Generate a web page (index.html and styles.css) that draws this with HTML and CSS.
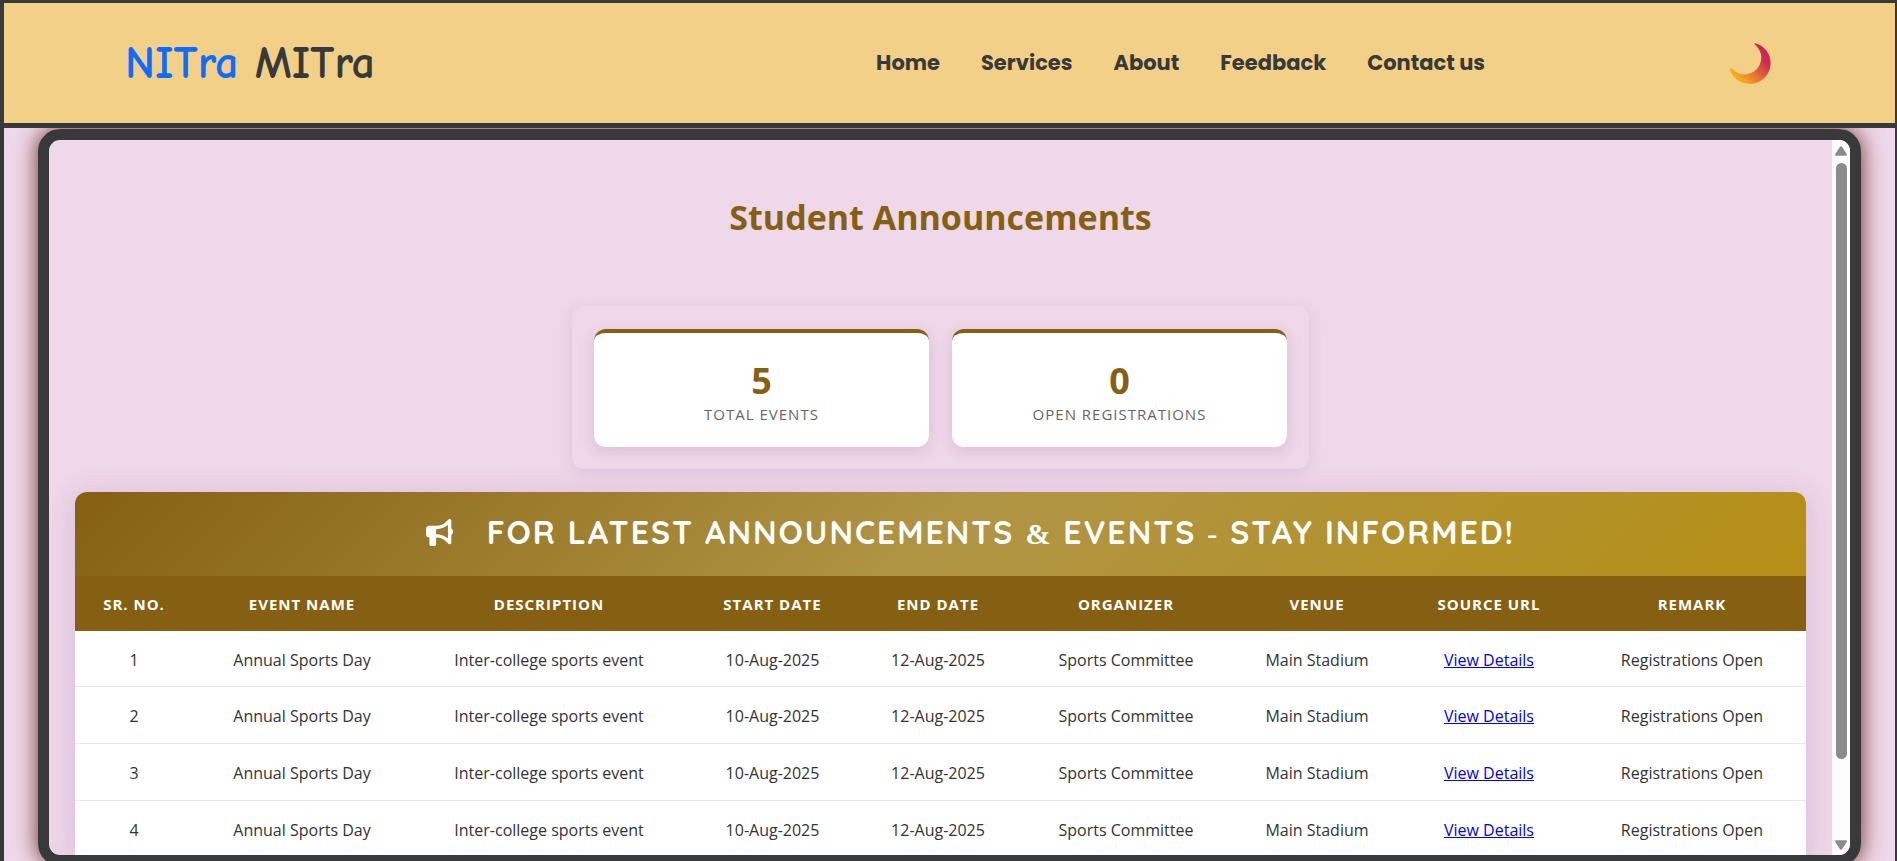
FILE: index.html
```html
<!DOCTYPE html>
<html lang="en">
<head>
<meta charset="utf-8">
<title>NITra MITra</title>
<link rel="stylesheet" href="styles.css">
</head>
<body>
<div class="page">
  <header class="header">
    <div class="logo"><span class="logo-accent">NITra</span> MITra</div>
    <nav class="nav">
      <a href="#">Home</a>
      <a href="#">Services</a>
      <a href="#">About</a>
      <a href="#">Feedback</a>
      <a href="#">Contact us</a>
    </nav>
    <button class="theme-toggle" aria-label="Toggle dark mode">
      <svg viewBox="0 0 42 42" width="42" height="42" aria-hidden="true">
        <defs>
          <linearGradient id="moon" x1="0.85" y1="0.15" x2="0.2" y2="0.85">
            <stop offset="0" stop-color="#cc2255"/>
            <stop offset="0.25" stop-color="#cf2f52"/>
            <stop offset="1" stop-color="#f9ab1c"/>
          </linearGradient>
        </defs>
        <path fill="url(#moon)" d="M26.300 1.200C35.500 3.800 41.600 11.500 41.600 21C41.600 32.800 32.400 41.800 21 41.800C12 41.800 4.200 36.500 1.100 28.200C0.500 26.600 2.200 25.800 3.200 27C6.500 30.600 10.600 32.400 15.300 32.400C25 32.400 32.300 25 32.300 15.600C32.300 10.800 30.300 6.700 26.600 3.300C25.300 2.200 25.400 1 26.300 1.200Z"/>
      </svg>
    </button>
  </header>

  <main class="frame">
    <div class="content">
      <h1 class="title">Student Announcements</h1>

      <section class="stats">
        <div class="stat">
          <div class="stat-value">5</div>
          <div class="stat-label">TOTAL EVENTS</div>
        </div>
        <div class="stat">
          <div class="stat-value">0</div>
          <div class="stat-label">OPEN REGISTRATIONS</div>
        </div>
      </section>

      <section class="board">
        <h2 class="banner">
          <svg class="horn" viewBox="0 0 512 512" width="27" height="27" aria-hidden="true">
            <path fill="#fff" d="M480 32c0-12.900-7.800-24.600-19.800-29.600s-25.700-2.200-34.900 6.900L381.700 53c-48 48-113.100 75-181 75H64c-35.300 0-64 28.700-64 64v96c0 35.300 28.700 64 64 64v128c0 17.700 14.300 32 32 32h64c17.700 0 32-14.300 32-32V352h8.700c67.900 0 133 27 181 75l43.600 43.600c9.200 9.200 22.900 11.900 34.900 6.900s19.800-16.600 19.800-29.600V300.400c18.600-8.800 32-32.500 32-60.400s-13.400-51.600-32-60.400V32zm-64 76.700V371.300C357.200 317.800 280.500 288 200.700 288H192V192h8.700c79.800 0 156.500-29.800 215.300-83.300z"/>
          </svg>
          <span>FOR LATEST ANNOUNCEMENTS <span class="amp">&amp;</span> EVENTS <span class="dash">-</span> STAY INFORMED!</span>
        </h2>
        <table class="events">
          <colgroup>
            <col class="c-no"><col class="c-name"><col class="c-desc"><col class="c-start"><col class="c-end"><col class="c-org"><col class="c-venue"><col class="c-url"><col class="c-remark">
          </colgroup>
          <thead>
            <tr><th>SR. NO.</th><th>EVENT NAME</th><th>DESCRIPTION</th><th>START DATE</th><th>END DATE</th><th>ORGANIZER</th><th>VENUE</th><th>SOURCE URL</th><th>REMARK</th></tr>
          </thead>
          <tbody>
            <tr><td>1</td><td>Annual Sports Day</td><td>Inter-college sports event</td><td>10-Aug-2025</td><td>12-Aug-2025</td><td>Sports Committee</td><td>Main Stadium</td><td><a href="#">View Details</a></td><td>Registrations Open</td></tr>
            <tr><td>2</td><td>Annual Sports Day</td><td>Inter-college sports event</td><td>10-Aug-2025</td><td>12-Aug-2025</td><td>Sports Committee</td><td>Main Stadium</td><td><a href="#">View Details</a></td><td>Registrations Open</td></tr>
            <tr><td>3</td><td>Annual Sports Day</td><td>Inter-college sports event</td><td>10-Aug-2025</td><td>12-Aug-2025</td><td>Sports Committee</td><td>Main Stadium</td><td><a href="#">View Details</a></td><td>Registrations Open</td></tr>
            <tr><td>4</td><td>Annual Sports Day</td><td>Inter-college sports event</td><td>10-Aug-2025</td><td>12-Aug-2025</td><td>Sports Committee</td><td>Main Stadium</td><td><a href="#">View Details</a></td><td>Registrations Open</td></tr>
          </tbody>
        </table>
      </section>
    </div>

    <div class="scrollbar" aria-hidden="true">
      <svg viewBox="0 0 12 10" width="12" height="10"><path fill="#8b8b8b" d="M5 0.800Q6-0.500 7 0.800L11.600 7.800Q12.400 9.600 11 9.800H1Q-0.400 9.600 0.400 7.800Z"/></svg>
      <div class="scroll-track"><div class="scroll-thumb"></div></div>
      <svg viewBox="0 0 12 10" width="12" height="10"><path fill="#8b8b8b" d="M5 9.200Q6 10.500 7 9.200L11.600 2.200Q12.400 0.400 11 0.200H1Q-0.400 0.400 0.400 2.200Z"/></svg>
    </div>
  </main>
</div>
</body>
</html>
```
FILE: styles.css
```css
* {
  box-sizing: border-box;
}

body {
  margin: 0;
  background: #efd8e9;
  font-family: "Segoe UI", "Open Sans", "Noto Sans", sans-serif;
  color: #333;
}

.page {
  display: flex;
  flex-direction: column;
  height: 100vh;
  overflow: hidden;
  border: solid #38393a;
  border-width: 3px 2px 0 4px;
}

.header {
  display: flex;
  flex: none;
  align-items: center;
  height: 125px;
  padding: 0 124px 0 121px;
  background: #f2d088;
  border-bottom: 5px solid #38393a;
  z-index: 1;
}

.logo {
  font-family: "Comic Sans MS", "Comic Neue", Lato, sans-serif;
  font-size: 46px;
  font-weight: 700;
  color: #38393a;
}

.logo-accent {
  color: #0d6efd;
}

.nav {
  display: flex;
  gap: 41px;
  margin-left: auto;
  margin-right: 244px;
  padding-bottom: 2px;
}

.nav a {
  font-family: Poppins, Inter, sans-serif;
  font-size: 21px;
  font-weight: 700;
  color: #38393a;
  text-decoration: none;
}

.theme-toggle {
  display: block;
  padding: 0;
  border: 0;
  background: none;
}

.theme-toggle svg {
  display: block;
}

.frame {
  display: flex;
  flex: none;
  height: calc(100vh - 124px);
  margin: 1px 34px 0;
  border: 11px solid #38393a;
  border-radius: 22px;
  overflow: hidden;
  box-shadow: 0 0 22px #6b2a1c;
}

.content {
  flex: 1;
  min-width: 0;
  overflow: hidden;
  padding: 51px 26px 0;
}

.title {
  margin: 0 0 63px;
  font-size: 34px;
  line-height: 52px;
  font-weight: 700;
  text-align: center;
  color: #856012;
}

.stats {
  display: grid;
  grid-template-columns: 1fr 1fr;
  gap: 23px;
  max-width: 737px;
  margin: 0 auto 23px;
  padding: 23px 22px 22px;
  border-radius: 12px;
  box-shadow: 0 4px 15px rgba(130, 80, 150, 0.14);
}

.stat {
  height: 118px;
  padding-top: 28px;
  border-top: 4px solid #856012;
  border-radius: 12px;
  background: #fff;
  text-align: center;
  box-shadow: 0 4px 15px rgba(100, 50, 100, 0.15);
}

.stat-value {
  font-size: 36px;
  line-height: 40px;
  font-weight: 700;
  color: #856012;
}

.stat-label {
  font-size: 15px;
  line-height: 26px;
  letter-spacing: 1px;
  color: #666;
}

.board {
  border-radius: 12px 12px 0 0;
  box-shadow: 0 4px 30px rgba(120, 60, 140, 0.2);
}

.banner {
  display: flex;
  align-items: center;
  justify-content: center;
  gap: 34px;
  height: 84px;
  margin: 0;
  padding: 0 0 4px 60px;
  border-radius: 12px 12px 0 0;
  background: linear-gradient(135deg, #856012 0%, #b09545 50%, #b58f16 100%);
  font-family: Quicksand, Lato, sans-serif;
  font-size: 32px;
  font-weight: 700;
  letter-spacing: 2px;
  color: #fff;
}

.amp,
.dash {
  font-family: "Liberation Serif", serif;
  font-size: 30px;
}

.events {
  width: 100%;
  table-layout: fixed;
  border-collapse: separate;
  border-spacing: 0;
  background: #fff;
}

.c-no { width: 118px; }
.c-name { width: 218px; }
.c-desc { width: 276px; }
.c-start { width: 171px; }
.c-end { width: 160px; }
.c-org { width: 216px; }
.c-venue { width: 166px; }
.c-url { width: 178px; }
.c-remark { width: 228px; }

.events th {
  height: 55px;
  padding: 0;
  background: #856012;
  color: #fff;
  font-size: 15px;
  font-weight: 700;
  letter-spacing: 1px;
}

.events td {
  height: 57px;
  padding: 2px 0 0;
  border-bottom: 1px solid #e8e8e8;
  font-size: 16px;
  text-align: center;
}

.events tbody tr:first-child td {
  height: 56px;
}

.events a {
  color: #0000ee;
}

.scrollbar {
  display: flex;
  flex: none;
  flex-direction: column;
  align-items: center;
  gap: 7px;
  width: 18px;
  padding: 6px 0 5px;
  background: #fcfcfc;
}

.scroll-track {
  flex: 1;
}

.scroll-thumb {
  width: 11px;
  height: 89%;
  border-radius: 6px;
  background: #8b8b8b;
}
```
